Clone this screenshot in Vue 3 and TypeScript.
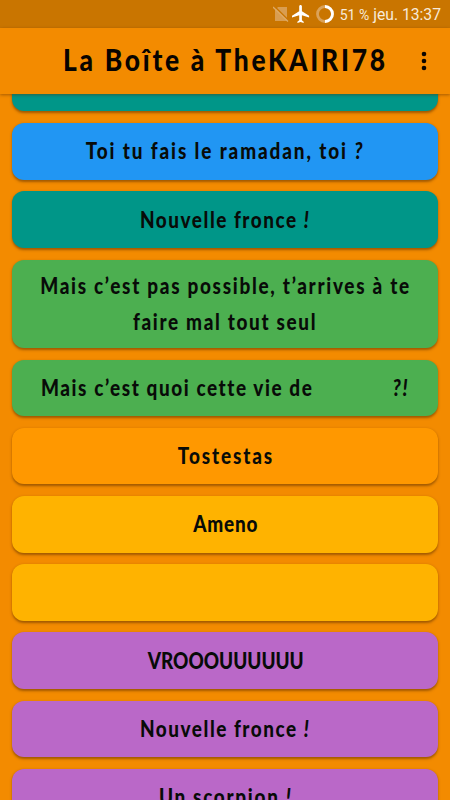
<script setup lang="ts">
interface Line {
  text: string
  mark?: string
  spacing: number
}
interface Sound {
  tone: string
  lines: Line[]
}

const sounds: Sound[] = [
  { tone: 'teal', lines: [] },
  { tone: 'blue', lines: [{ text: 'Toi tu fais le ramadan, toi ', mark: '?', spacing: 2.2 }] },
  { tone: 'teal', lines: [{ text: 'Nouvelle fronce ', mark: '!', spacing: 1.8 }] },
  {
    tone: 'green',
    lines: [
      { text: 'Mais c’est pas possible, t’arrives à te', spacing: 2 },
      { text: 'faire mal tout seul', spacing: 1.95 },
    ],
  },
  { tone: 'green', lines: [{ text: 'Mais c’est quoi cette vie de             ', mark: '?!', spacing: 1.85 }] },
  { tone: 'orange', lines: [{ text: 'Tostestas', spacing: 2.2 }] },
  { tone: 'amber', lines: [{ text: 'Ameno', spacing: 0.9 }] },
  { tone: 'amber', lines: [] },
  { tone: 'purple', lines: [{ text: 'VROOOUUUUUU', spacing: 0 }] },
  { tone: 'purple', lines: [{ text: 'Nouvelle fronce ', mark: '!', spacing: 1.8 }] },
  { tone: 'purple', lines: [{ text: 'Un scorpion ', mark: '!', spacing: 2 }] },
]
</script>

<template>
  <div class="screen">
    <div class="status">
      <svg class="sim" viewBox="0 0 16 16">
        <path d="M5 1H14V15H2V4Z" fill="#d99d50" />
        <path d="M1 0L16 15" stroke="#c97500" stroke-width="1.6" />
        <path d="M0 1L15 15.500" stroke="#deaa66" stroke-width="1.3" />
      </svg>
      <svg class="plane" viewBox="2 2 20 20">
        <path d="M21 16v-2l-8-5V3.500c0-.83-.67-1.500-1.500-1.500S10 2.670 10 3.500V9l-8 5v2l8-2.500V19l-2 1.500V22l3.500-1 3.500 1v-1.500L13 19v-5.500l8 2.500z" fill="#fff" />
      </svg>
      <svg class="battery" viewBox="0 0 18 18">
        <circle cx="9" cy="9" r="7.500" fill="none" stroke="#dba258" stroke-width="2.800" />
        <path d="M9 1.500A7.500 7.500 0 0 1 9 16.500" fill="none" stroke="#fff" stroke-width="2.800" />
      </svg>
      <span class="percent">51 %</span>
      <span class="clock">jeu. 13:37</span>
    </div>
    <header class="bar">
      <h1>La Boîte à TheKAIRI78</h1>
      <svg class="more" viewBox="0 0 6 20">
        <circle cx="3" cy="3" r="2.300" />
        <circle cx="3" cy="10" r="2.300" />
        <circle cx="3" cy="17" r="2.300" />
      </svg>
    </header>
    <main class="viewport">
      <div class="list">
        <div v-for="(sound, i) in sounds" :key="i" class="card" :class="sound.tone">
          <span
            v-for="line in sound.lines"
            :key="line.text"
            class="line"
            :style="{ letterSpacing: line.spacing + 'px' }"
          >{{ line.text }}<i v-if="line.mark">{{ line.mark }}</i></span>
        </div>
      </div>
    </main>
  </div>
</template>

<style>
body {
  margin: 0;
  background: #f38b00;
}
</style>

<style scoped>
.screen {
  width: 450px;
  height: 800px;
  display: flex;
  flex-direction: column;
  overflow: hidden;
  background: #f38b00;
}
.status {
  height: 28px;
  flex: none;
  display: flex;
  align-items: center;
  justify-content: flex-end;
  padding-right: 9px;
  box-sizing: border-box;
  background: #c97500;
  color: #f7ead9;
  font: 15.7px/28px Roboto, sans-serif;
  white-space: nowrap;
}
.status span {
  padding-top: 1px;
}
.sim {
  width: 16px;
  height: 16px;
  margin-right: 3px;
}
.plane {
  width: 18px;
  height: 18px;
  margin-right: 6px;
}
.battery {
  width: 18px;
  height: 18px;
  margin-right: 6px;
}
.percent {
  font-size: 14px;
  margin-right: 4px;
}
.bar {
  height: 66px;
  flex: none;
  display: flex;
  align-items: center;
  justify-content: space-between;
  box-sizing: border-box;
  padding: 0 23px 0 63px;
  background: #f38b00;
  box-shadow: 0 1px 3px rgba(90, 45, 0, 0.5);
  z-index: 1;
}
h1 {
  width: 330px;
  margin: 0;
  padding-bottom: 4px;
  font: 900 30px/56px Lato, sans-serif;
  letter-spacing: 3.1px;
  color: #080400;
  white-space: nowrap;
  transform: scaleX(0.88);
  transform-origin: left;
}
.more {
  width: 6px;
  height: 20px;
  fill: #0c0600;
}
.viewport {
  flex: 1;
  min-height: 0;
  overflow: hidden;
}
.list {
  display: flex;
  flex-direction: column;
  gap: 11.8px;
  margin-top: -39px;
  padding: 0 12px;
}
.card {
  flex: none;
  min-height: 56.4px;
  box-sizing: border-box;
  display: flex;
  flex-direction: column;
  align-items: center;
  justify-content: center;
  padding: 8.2px 28px;
  border-radius: 12px;
  box-shadow: 0 1.5px 2.5px rgba(80, 40, 0, 0.5);
}
.line {
  margin-right: -1px;
  font: 900 22px/36px Lato, sans-serif;
  color: #080b08;
  white-space: pre;
  transform: scaleX(0.86);
}
.teal { background: #009688; }
.blue { background: #2196f3; }
.green { background: #4caf50; }
.orange { background: #ff9800; }
.amber { background: #ffb300; }
.purple { background: #ba68c8; }
</style>
